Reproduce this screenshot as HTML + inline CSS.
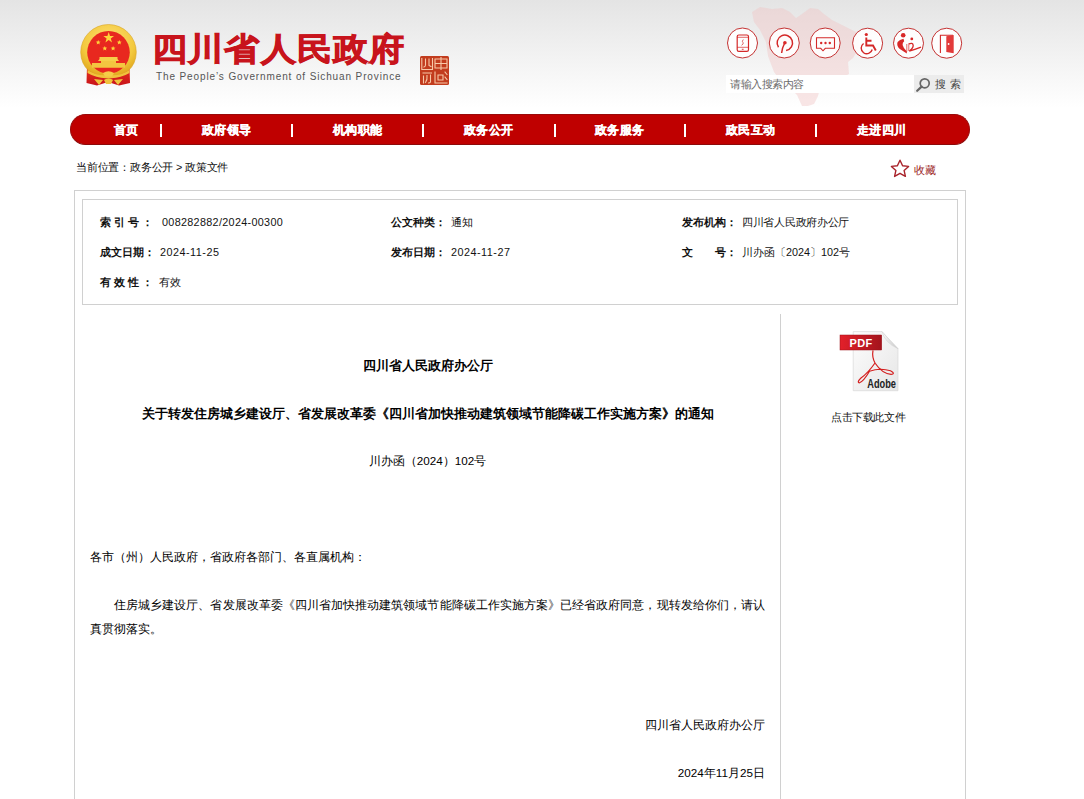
<!DOCTYPE html>
<html><head><meta charset="utf-8">
<style>
*{margin:0;padding:0;box-sizing:border-box}
html,body{width:1084px;height:799px;overflow:hidden;background:#fff}
body{font-family:"Liberation Sans",sans-serif;color:#333;position:relative}
.a{position:absolute;white-space:nowrap}
#hdr{position:absolute;left:0;top:0;width:1084px;height:108px;background:linear-gradient(#e4e4e4,#f3f3f3 55%,#fff 100%)}
#nav{position:absolute;left:70px;top:114px;width:900px;height:31px;background:#bf0000;border-radius:16px;border:1px solid #9a0a0a;border-bottom-color:#8c0a0a}
.ni{position:absolute;top:8px;color:#fff;font-weight:bold;font-size:12px;line-height:14px;letter-spacing:0.3px;-webkit-text-stroke:0.3px #fff}
.sep{position:absolute;top:9px;width:2px;height:13px;background:#fff}
#crumb{left:76px;top:160px;font-size:10.8px;line-height:14px;color:#111;letter-spacing:-0.2px}
#outer{position:absolute;left:74px;top:190px;width:892px;height:700px;border:1px solid #d0d0d0}
#inner{position:absolute;left:82px;top:199px;width:876px;height:106px;border:1px solid #d0d0d0}
.lb{position:absolute;font-size:10.8px;font-weight:bold;color:#111;line-height:14px}
.vl{position:absolute;font-size:10.8px;color:#111;line-height:14px}
#divd{position:absolute;left:780px;top:314px;width:1px;height:500px;background:#d0d0d0}
.t{position:absolute;left:90px;width:675px;text-align:center;font-size:12.6px;line-height:24px;color:#000;}
.p{position:absolute;left:90px;width:675px;font-size:11.7px;line-height:24px;color:#000;}
#ttl{left:152px;top:24px;font-size:32px;font-weight:700;color:#c8141c;line-height:50px;letter-spacing:0.9px;-webkit-text-stroke:0.9px #c8141c;transform:scaleX(1.1);transform-origin:0 0}
#eng{left:156px;top:70px;font-size:10px;color:#555;line-height:14px;letter-spacing:0.88px}
</style></head><body>
<div id="hdr"></div>
<!-- map silhouette -->
<svg class="a" style="left:745px;top:4px" width="120" height="104" viewBox="745 4 120 104">
<path fill="#f0c4c4" opacity="0.42" d="M752,12 L760,7 L772,9 L782,8 L790,12 L796,18 L802,14 L810,8 L818,9 L824,14 L832,20 L840,24 L848,28 L856,32 L859,40 L858,50 L853,58 L848,62 L849,74 L838,80 L820,88 L818,96 L814,104 L808,106 L802,106 L797,95 L790,88 L780,80 L774,72 L768,56 L766,42 L760,30 L754,22 Z"/>
</svg>
<!-- emblem -->
<svg class="a" style="left:78px;top:22px" width="62" height="66" viewBox="78 22 62 66">
<defs>
<radialGradient id="gold" cx="50%" cy="35%" r="65%"><stop offset="0" stop-color="#ffe27a"/><stop offset="0.7" stop-color="#f3c93e"/><stop offset="1" stop-color="#e2a91f"/></radialGradient>
<linearGradient id="rib" x1="0" y1="0" x2="0" y2="1"><stop offset="0" stop-color="#e8321e"/><stop offset="1" stop-color="#c8141a"/></linearGradient>
</defs>
<path d="M87,66 L86.5,83 L97,85.5 L108,82 L119,85.5 L130,83 L129.5,66 Z" fill="url(#rib)"/>
<path d="M108.5,24.5 A27.8,27.8 0 0 1 136.3,52.3 Q136,64 128,71 Q118,77 108.5,76.5 Q99,77 89,71 Q81,64 80.7,52.3 A27.8,27.8 0 0 1 108.5,24.5 Z" fill="url(#gold)" stroke="#d9a526" stroke-width="0.6"/>
<circle cx="108.5" cy="52.3" r="21.3" fill="#e8281f"/>
<path d="M99.5,57 L117.5,57 L117.5,59 L119,61 L98,61 L99.5,59 Z" fill="#f6cf4a"/>
<path d="M101,61 L116,61 L116,63 L125,63 L125,67.8 L92,67.8 L92,63 L101,63 Z" fill="#f3c640"/>
<path d="M87.5,70 Q97,76.5 108.5,75 Q120,76.5 129.5,70 L129.5,73 Q119,79 108.5,78 Q98,79 87.5,73 Z" fill="#f0c33c"/>
<path d="M103,73 Q108.5,69.5 114,73 L112,76.5 L105,76.5 Z" fill="#f5cd48"/>
<path d="M94,79 L99,85 L103,80 Z M123,79 L118,85 L114,80 Z M104,80 Q108.5,76.5 113,80 L111,84 L106,84 Z" fill="#f0c33c"/>
<g fill="#ffd43a">
<polygon points="108.7,32 110,36 114,36 110.8,38.5 112,42.5 108.7,40 105.4,42.5 106.6,38.5 103.4,36 107.4,36"/>
<polygon points="98.2,40 98.9,41.6 100.6,41.7 99.3,42.8 99.7,44.5 98.2,43.6 96.7,44.5 97.1,42.8 95.8,41.7 97.5,41.6"/>
<polygon points="119.3,40 120,41.6 121.7,41.7 120.4,42.8 120.8,44.5 119.3,43.6 117.8,44.5 118.2,42.8 116.9,41.7 118.6,41.6"/>
<polygon points="104.8,46 105.5,47.6 107.2,47.7 105.9,48.8 106.3,50.5 104.8,49.6 103.3,50.5 103.7,48.8 102.4,47.7 104.1,47.6"/>
<polygon points="113.1,46 113.8,47.6 115.5,47.7 114.2,48.8 114.6,50.5 113.1,49.6 111.6,50.5 112,48.8 110.7,47.7 112.4,47.6"/>
</g>
</svg>
<!-- icons -->
<svg class="a" style="left:720px;top:20px" width="250" height="46" viewBox="720 20 250 46">
<g fill="#fff" fill-opacity="0.9" stroke="#c43232" stroke-width="1">
<circle cx="742.5" cy="43" r="15"/>
<circle cx="784.3" cy="43" r="15"/>
<circle cx="825.2" cy="43" r="15"/>
<circle cx="867.6" cy="43.2" r="15"/>
<circle cx="908.5" cy="43.2" r="15"/>
<circle cx="946.7" cy="43.2" r="15"/>
</g>
<g fill="none" stroke="#d42828" stroke-width="1.3">
<rect x="737.2" y="35" width="11.3" height="16.3" rx="1.6" stroke-width="1.2"/>
<line x1="737" y1="37.3" x2="748.5" y2="37.3" stroke-width="0.7"/>
<line x1="737" y1="47.3" x2="748.5" y2="47.3" stroke-width="0.7"/>
<path d="M743.3,39.5 Q741.5,41.5 743,42.5 Q744,44 741.5,45.3" stroke-width="0.7"/>
<path d="M778.5,47.2 A7.7,7.7 0 1 1 786.1,50.4" stroke-width="1.5"/>
<path d="M784.7,43 Q782.3,47.5 781.6,53" stroke-width="1.5"/>
<path d="M816.5,37.8 L834.5,37.8 L834.5,48.3 L825.3,48.3 L823,50.8 L820.7,48.3 L816.5,48.3 Z" stroke-width="1.1"/>
<path d="M866.3,37.5 L866.3,45.5 L873,45.5 L875.8,50.5 M866.3,40.8 L871.5,40.8" stroke-width="1.9"/>
<path d="M863.6,43.5 A5.6,5.6 0 1 0 872.2,49.5" stroke-width="1.4"/>
<path d="M940.4,53 L940.4,35.2 L953,35.2" stroke-width="1.1"/>
</g>
<g fill="#d82828">
<rect x="741.8" y="48.8" width="1.8" height="0.9"/>
<circle cx="784.9" cy="42.8" r="1.8"/>
<circle cx="821.2" cy="43" r="1.2"/><circle cx="825.5" cy="43" r="1.2"/><circle cx="829.8" cy="43" r="1.2"/>
<circle cx="866.3" cy="34.5" r="1.6"/>
<circle cx="903.2" cy="35.2" r="2.3"/>
<circle cx="911.8" cy="38.9" r="1.4"/>
<path d="M903.5,38.8 Q899.5,39.5 897.6,42 Q896.3,45.5 899.5,48.8 L906.8,53.6 L906.9,51.4 Q903.3,48.2 902.6,45 Q902.4,42.5 904.2,41.2 Z"/>
<path d="M946.3,36.3 L953.7,35 L953.7,53.2 L946.3,52 Z" fill="#e23a3a"/>
</g>
<circle cx="948.6" cy="44" r="0.9" fill="#fff"/>
<g fill="none" stroke="#d82828"><path d="M906.8,44 L906.8,51.5 M908.8,44.5 L908.8,51" stroke-width="0.7"/><path d="M908.5,44.2 Q912.8,42.2 913.2,45.3 Q913.3,48.3 909.3,51 Q914.5,49.8 921,47.2" stroke-width="1.3"/></g>
</svg>
<!-- search -->
<div class="a" style="left:726px;top:75px;width:188px;height:18px;background:#fff"></div>
<div class="a" style="left:730px;top:77px;font-size:11px;line-height:14px;color:#6a6a6a;letter-spacing:-0.45px">请输入搜索内容</div>
<div class="a" style="left:914px;top:75px;width:50px;height:18px;background:#ececec"></div>
<svg class="a" style="left:915px;top:76px" width="16" height="16" viewBox="0 0 16 16">
<circle cx="9.7" cy="7.3" r="4.5" fill="none" stroke="#666" stroke-width="1.7"/>
<line x1="6.6" y1="10.6" x2="2.2" y2="14.8" stroke="#666" stroke-width="2.2" stroke-linecap="round"/>
</svg>
<div class="a" style="left:935px;top:77px;font-size:11px;line-height:14px;color:#444;letter-spacing:4px">搜索</div>
<div class="a" id="ttl">四川省人民政府</div>
<div class="a" id="eng">The People’s Government of Sichuan Province</div>
<!-- seal -->
<svg class="a" style="left:420px;top:56px" width="29" height="29" viewBox="0 0 29 29">
<rect x="0" y="0" width="29" height="29" rx="1.5" fill="#c23c1e"/>
<g fill="none" stroke="#f8c8a8" stroke-width="1.1" stroke-linecap="square">
<path d="M1.8,2.5 L1.8,13.5 L12.5,13.5 L12.5,2.5 M5.5,3 L5.5,9 Q5.5,10.5 4,11 M9,3 L9,9.5 L11,10.5"/>
<path d="M3,17 L11.5,17 M3.5,20 L3.5,27 M7,19.5 Q7.5,24 5.5,26.5 M10.5,19 L10.5,26 Q10,27 8.5,27"/>
<path d="M15,3 L27,3 L27,12 L15,12 Z M21,1.5 L21,13.5 M15,7.5 L27,7.5"/>
<path d="M15,16 L15,27 L27,27 M18,19 L23,19 L23,24 L18,24 Z M25,16 L27,18.5 M25,21 L27,23.5"/>
</g>
</svg>

<div id="nav">
  <div class="ni" style="left:43px">首页</div>
  <div class="sep" style="left:89px"></div>
  <div class="ni" style="left:131px">政府领导</div>
  <div class="sep" style="left:220px"></div>
  <div class="ni" style="left:262px">机构职能</div>
  <div class="sep" style="left:351px"></div>
  <div class="ni" style="left:393px">政务公开</div>
  <div class="sep" style="left:483px"></div>
  <div class="ni" style="left:524px">政务服务</div>
  <div class="sep" style="left:613px"></div>
  <div class="ni" style="left:655px">政民互动</div>
  <div class="sep" style="left:744px"></div>
  <div class="ni" style="left:786px">走进四川</div>
</div>

<div class="a" id="crumb">当前位置：政务公开 &gt; 政策文件</div>

<svg class="a" style="left:889px;top:158px" width="22" height="21" viewBox="0 0 22 21">
<path d="M11,2.2 L13.6,7.8 L19.6,8.4 L15.1,12.4 L16.4,18.4 L11,15.3 L5.6,18.4 L6.9,12.4 L2.4,8.4 L8.4,7.8 Z" fill="none" stroke="#a8222a" stroke-width="1.4" stroke-linejoin="round"/>
</svg>
<div class="a" style="left:914px;top:163px;font-size:10.8px;line-height:14px;color:#9a1a1a">收藏</div>
<div id="outer"></div>
<div id="inner"></div>

<div class="lb" style="left:100px;top:215px">索 引 号 ：</div>
<div class="vl" style="left:162px;top:215px;letter-spacing:0.32px">008282882/2024-00300</div>
<div class="lb" style="left:100px;top:245px">成文日期：</div>
<div class="vl" style="left:160px;top:245px;letter-spacing:0.5px">2024-11-25</div>
<div class="lb" style="left:100px;top:275px">有 效 性 ：</div>
<div class="vl" style="left:159px;top:275px">有效</div>

<div class="lb" style="left:391px;top:215px">公文种类：</div>
<div class="vl" style="left:451px;top:215px">通知</div>
<div class="lb" style="left:391px;top:245px">发布日期：</div>
<div class="vl" style="left:451px;top:245px;letter-spacing:0.5px">2024-11-27</div>

<div class="lb" style="left:682px;top:215px">发布机构：</div>
<div class="vl" style="left:742px;top:215px;letter-spacing:-0.3px">四川省人民政府办公厅</div>
<div class="lb" style="left:682px;top:245px">文　　号：</div>
<div class="vl" style="left:742px;top:245px">川办函〔2024〕102号</div>

<div id="divd"></div>
<!-- pdf -->
<svg class="a" style="left:838px;top:328px" width="64" height="66" viewBox="838 328 64 66">
<defs><linearGradient id="pg" x1="0" y1="0" x2="1" y2="1"><stop offset="0" stop-color="#fdfdfd"/><stop offset="1" stop-color="#e6e6e6"/></linearGradient>
<linearGradient id="rb" x1="0" y1="0" x2="1" y2="0"><stop offset="0" stop-color="#e3202a"/><stop offset="1" stop-color="#a3141c"/></linearGradient>
<linearGradient id="fold" x1="0" y1="0" x2="1" y2="1"><stop offset="0" stop-color="#ffffff"/><stop offset="1" stop-color="#c8c8c8"/></linearGradient></defs>
<path d="M853.2,331.6 L882,331.6 L898,348.7 L898,390.7 L853.2,390.7 Z" fill="url(#pg)" stroke="#d8d8d8" stroke-width="0.7"/>
<path d="M882,331.6 Q885,343 898,348.7 Q889,340 882,331.6 Z" fill="url(#fold)" stroke="#cfcfcf" stroke-width="0.5"/>
<rect x="840" y="335" width="41.7" height="15" fill="url(#rb)" stroke="#9a1018" stroke-width="0.5"/>
<text x="861" y="346.9" text-anchor="middle" font-family="Liberation Sans" font-weight="bold" font-size="11" fill="#fff" letter-spacing="0.3">PDF</text>
<path d="M873,350.3 Q871.8,357 875,363 Q868,373 861,378 Q856.5,382.5 859.5,382.8 Q863.5,381.5 869.5,371.3 Q880,367.5 890.5,370.8 Q896,373.8 891,374.4 Q882,373.5 875,363" fill="none" stroke="#d42020" stroke-width="1.2"/>
<text x="896" y="387.7" text-anchor="end" font-family="Liberation Sans" font-weight="bold" font-size="12.5" fill="#222" transform="translate(896,0) scale(0.74,1) translate(-896,0)">Adobe</text>
</svg>
<div class="a" style="left:831px;top:409px;font-size:10.8px;line-height:16px;color:#111;letter-spacing:-0.4px">点击下载此文件</div>


<div class="t" style="top:354px;font-weight:bold;-webkit-text-stroke:0">四川省人民政府办公厅</div>
<div class="t" style="top:402px;font-weight:bold;-webkit-text-stroke:0">关于转发住房城乡建设厅、省发展改革委《四川省加快推动建筑领域节能降碳工作实施方案》的通知</div>
<div class="t" style="top:449px;font-weight:normal;font-size:11.7px">川办函（2024）102号</div>

<div class="p" style="top:545px">各市（州）人民政府，省政府各部门、各直属机构：</div>
<div class="p" style="top:593px;text-indent:24px;text-align:justify;text-align-last:left;white-space:normal">住房城乡建设厅、省发展改革委《四川省加快推动建筑领域节能降碳工作实施方案》已经省政府同意，现转发给你们，请认真贯彻落实。</div>
<div class="p" style="top:713px;text-align:right">四川省人民政府办公厅</div>
<div class="p" style="top:761px;text-align:right">2024年11月25日</div>

</body></html>
